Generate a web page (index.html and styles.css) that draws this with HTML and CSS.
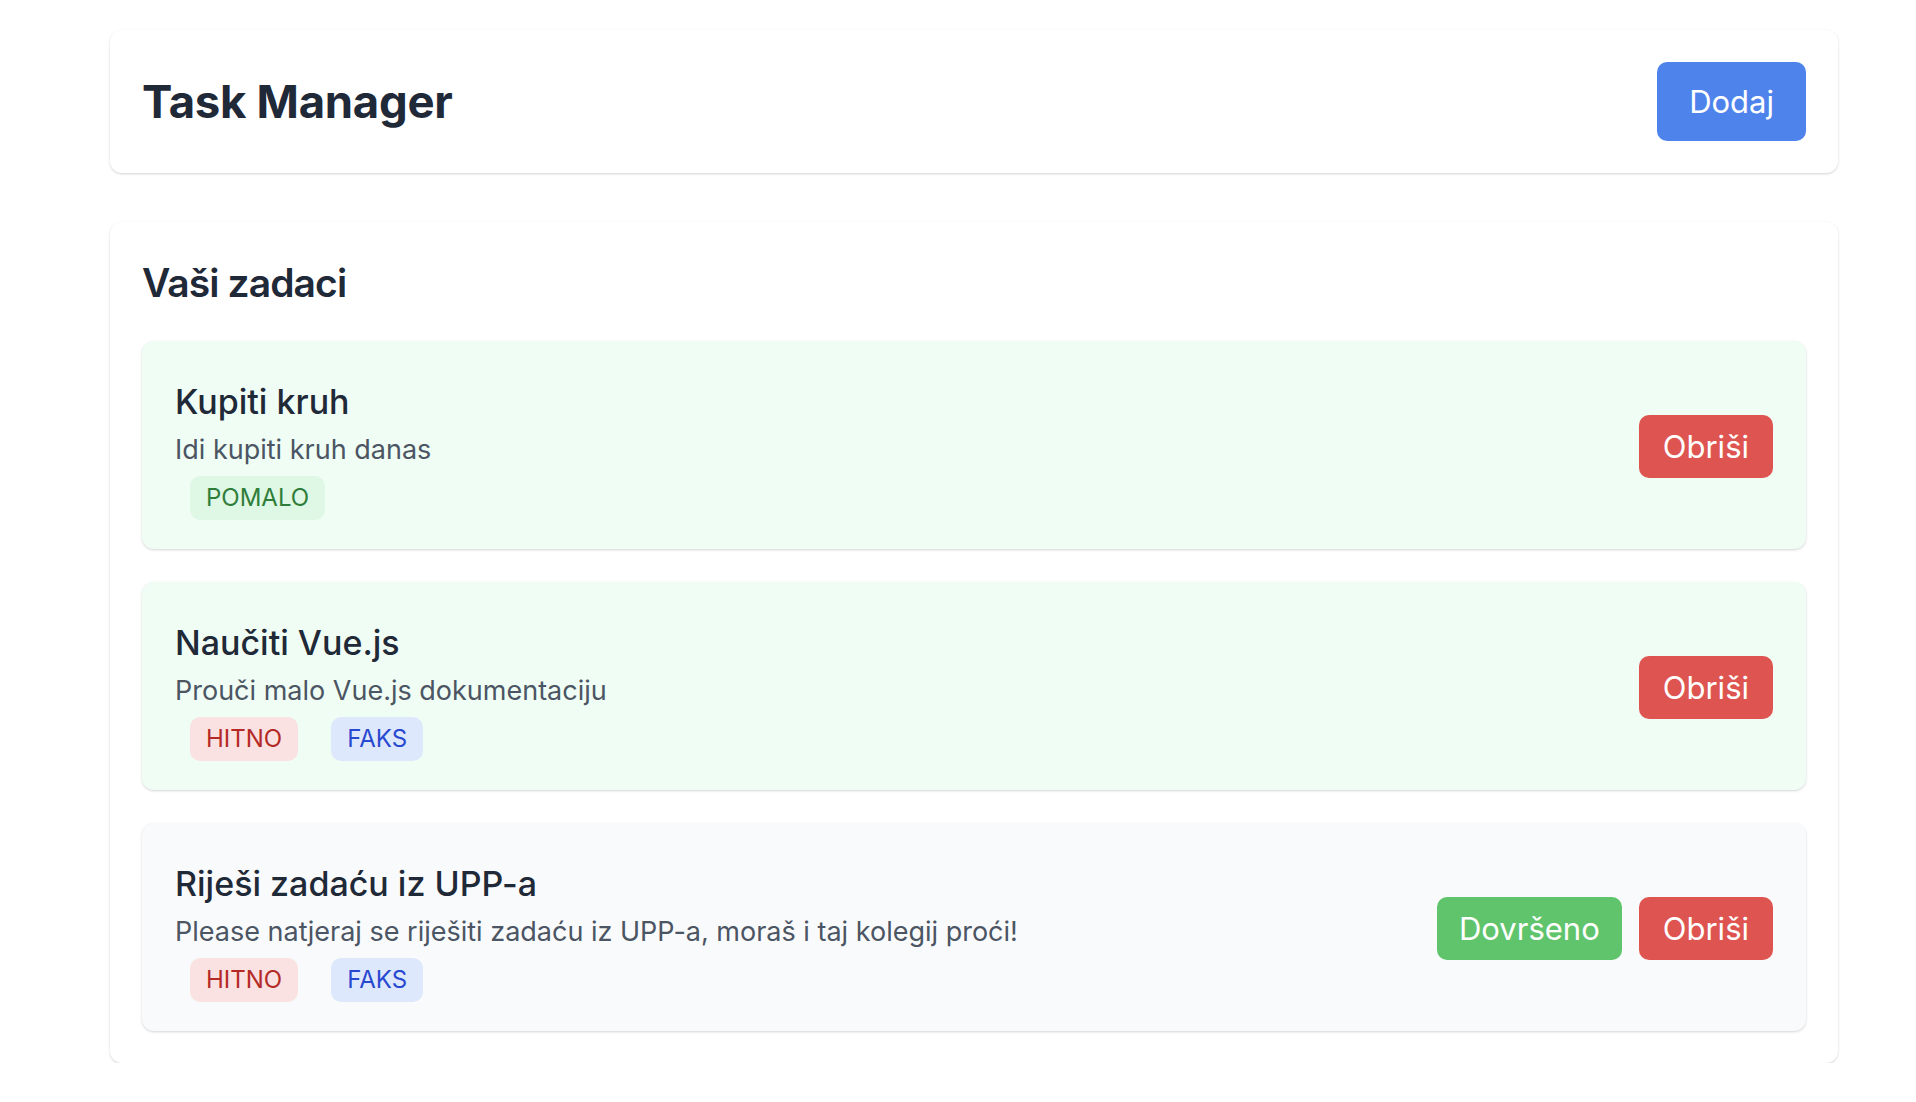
FILE: index.html
```html
<!DOCTYPE html>
<html lang="hr">
<head>
<meta charset="utf-8">
<title>Task Manager</title>
<link rel="stylesheet" href="styles.css">
</head>
<body>
<div class="page">
  <header class="card header">
    <h1 class="app-title">Task Manager</h1>
    <button class="btn btn-blue btn-lg">Dodaj</button>
  </header>

  <section class="card tasks">
    <h2 class="section-title">Vaši zadaci</h2>
    <div class="task-list">
      <div class="task task-done">
        <div class="task-body">
          <h3 class="task-title">Kupiti kruh</h3>
          <p class="task-desc">Idi kupiti kruh danas</p>
          <div class="tags">
            <span class="tag tag-green">POMALO</span>
          </div>
        </div>
        <div class="actions">
          <button class="btn btn-red">Obriši</button>
        </div>
      </div>

      <div class="task task-done">
        <div class="task-body">
          <h3 class="task-title">Naučiti Vue.js</h3>
          <p class="task-desc">Prouči malo Vue.js dokumentaciju</p>
          <div class="tags">
            <span class="tag tag-red">HITNO</span>
            <span class="tag tag-blue">FAKS</span>
          </div>
        </div>
        <div class="actions">
          <button class="btn btn-red">Obriši</button>
        </div>
      </div>

      <div class="task task-open">
        <div class="task-body">
          <h3 class="task-title">Riješi zadaću iz UPP-a</h3>
          <p class="task-desc">Please natjeraj se riješiti zadaću iz UPP-a, moraš i taj kolegij proći!</p>
          <div class="tags">
            <span class="tag tag-red">HITNO</span>
            <span class="tag tag-blue">FAKS</span>
          </div>
        </div>
        <div class="actions">
          <button class="btn btn-green">Dovršeno</button>
          <button class="btn btn-red">Obriši</button>
        </div>
      </div>
    </div>
  </section>
</div>
</body>
</html>
```

FILE: styles.css
```css
* { box-sizing: border-box; }

html, body {
  margin: 0;
  padding: 0;
  background: #ffffff;
}

body {
  font-family: Inter, "Noto Sans", "Liberation Sans", sans-serif;
  color: #1f2937;
}

.page {
  width: 1728px;
  margin-left: 110px;
  padding-top: 30px;
  display: flex;
  flex-direction: column;
  gap: 49px;
}

.card {
  background: #fff;
  border-radius: 12px;
  box-shadow: 0 1px 3px rgba(0, 0, 0, 0.12), 0 1px 2px rgba(0, 0, 0, 0.06);
  padding: 32px;
}

.header {
  display: flex;
  align-items: center;
  justify-content: space-between;
}

.app-title {
  margin: 0;
  font-size: 45.5px;
  font-weight: 700;
  line-height: 56px;
  color: #1f2937;
  letter-spacing: -0.3px;
}

.btn {
  font-family: inherit;
  border: none;
  color: #fff;
  font-size: 31px;
  line-height: 39px;
  border-radius: 10px;
  padding: 12px 24px;
  cursor: pointer;
}

.btn-lg { padding: 20px 32px; }
.btn-blue { background: #4f83ec; }
.btn-red { background: #de5450; }
.btn-green { background: #5fc46c; padding: 12px 22px; }

.section-title {
  margin: 5px 0 34px;
  font-size: 39px;
  line-height: 48px;
  font-weight: 600;
  letter-spacing: -0.9px;
  color: #1f2937;
}

.task-list {
  display: flex;
  flex-direction: column;
  gap: 33px;
}

.task {
  display: flex;
  align-items: center;
  justify-content: space-between;
  border-radius: 12px;
  padding: 32px 33px 29px 33px;
  box-shadow: 0 1px 3px rgba(0, 0, 0, 0.12), 0 1px 2px rgba(0, 0, 0, 0.05);
  min-height: 208px;
}

.task-done { background: #f0fdf4; }
.task-open { background: #f9fafb; }

.task-title {
  margin: 8px 0 11px;
  font-size: 34px;
  line-height: 41px;
  font-weight: 500;
  color: #1f2937;
}

.task-desc {
  margin: 0 0 10px;
  font-size: 27px;
  line-height: 33px;
  color: #4b5563;
}

.tags {
  display: flex;
  gap: 33px;
  padding-left: 15px;
}

.tag {
  font-size: 24px;
  line-height: 24px;
  padding: 10px 16px;
  border-radius: 10px;
}

.tag-green { background: #dff7e5; color: #2f7d3a; }
.tag-red { background: #fbe2e2; color: #b42a26; }
.tag-blue { background: #dee8fc; color: #2848d0; }

.actions {
  display: flex;
  gap: 17px;
}
```
